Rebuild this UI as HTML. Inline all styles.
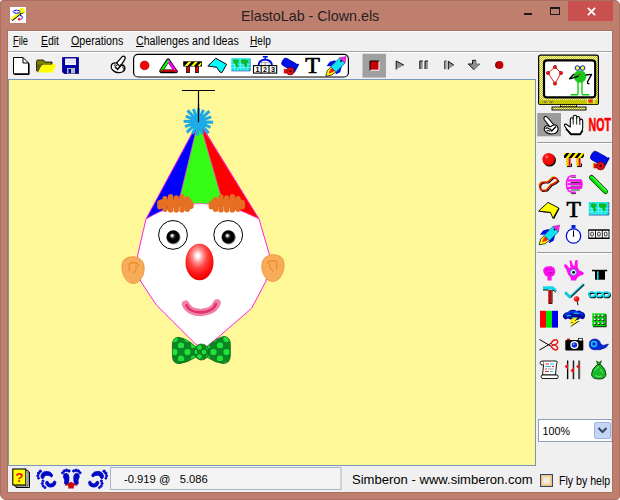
<!DOCTYPE html>
<html><head><meta charset="utf-8">
<style>
*{box-sizing:border-box;margin:0;padding:0}
html,body{width:620px;height:500px;overflow:hidden;background:#fff;font-family:"Liberation Sans",sans-serif;}
#win{position:absolute;left:0;top:0;width:620px;height:500px;background:#bf7f6f;border-radius:3px 5px 4px 6px;border:1px solid #a96f61;}
#client{position:absolute;left:8px;top:31px;width:604px;height:461px;background:#f0f0f0;}
.abs,svg{position:absolute}
#title{position:absolute;left:240.8px;top:7px;white-space:nowrap;font-size:15px;color:#262220;transform-origin:0 0;transform:scaleX(0.953)}
#close{position:absolute;left:568px;top:1px;width:45px;height:20px;background:#c8504f}
#canvas{position:absolute;left:8px;top:79px;width:528px;height:387px;background:#fff899;border:1px solid #7597ba}
.menu{position:absolute;top:34px;font-size:12px;color:#000;white-space:nowrap;transform-origin:0 0}
.px{shape-rendering:crispEdges}
.sb{position:absolute;white-space:nowrap;color:#000}
</style></head><body>
<div id="win"></div>
<div class="abs" style="left:7px;top:30px;width:606px;height:463px;background:#aa7162"></div>
<div id="client"></div>
<div class="abs" style="left:8px;top:31px;width:604px;height:1px;background:#f9f9fd"></div>
<div id="title">ElastoLab - Clown.els</div>
<div id="close"></div>
<svg style="left:10px;top:7px" width="16" height="16" viewBox="0 0 16 16">
<rect width="16" height="16" fill="#fff"/>
<path d="M2 13.3L9.5 7.3L14.2 4.8" stroke="#000" stroke-width="1.8" fill="none"/>
<path d="M1.6 12.2L9.6 5.8" stroke="#ffff00" stroke-width="2.3" fill="none"/>
<ellipse cx="12" cy="3.6" rx="2.9" ry="2.5" fill="#ffff00"/>
<path d="M9 5.5L12 6.5L11 4z" fill="#ffff00"/>
<ellipse cx="6.6" cy="4.7" rx="3.4" ry="1.5" fill="none" stroke="#0000ff" stroke-width="1"/>
<path d="M9.8 8Q12.8 8.8 12.4 10.8Q12.2 11.8 11.3 12.2" stroke="#0000ff" stroke-width="1" fill="none"/>
<circle cx="9.3" cy="12.3" r="1.3" fill="#ff0000"/>
</svg>
<div class="abs" style="left:524px;top:13px;width:8px;height:2px;background:#1a1a1a"></div>
<div class="abs" style="left:550px;top:7px;width:10px;height:8px;border:1px solid #1a1a1a;border-top-width:2px"></div>
<svg style="left:586px;top:6px" width="11" height="11" viewBox="0 0 11 11"><path d="M1.9 1.9L9.1 9.1M9.1 1.9L1.9 9.1" stroke="#fff" stroke-width="1.8" fill="none"/></svg>

<div class="menu" style="left:13px;transform:scaleX(0.775)"><u>F</u>ile</div>
<div class="menu" style="left:40.8px;transform:scaleX(0.87)"><u>E</u>dit</div>
<div class="menu" style="left:71px;transform:scaleX(0.892)"><u>O</u>perations</div>
<div class="menu" style="left:135.5px;transform:scaleX(0.885)"><u>C</u>hallenges and Ideas</div>
<div class="menu" style="left:250.3px;transform:scaleX(0.84)"><u>H</u>elp</div>
<div class="abs" style="left:8px;top:51px;width:604px;height:1px;background:#a5a5a5"></div>
<div class="abs" style="left:8px;top:52px;width:604px;height:1px;background:#fbfbfb"></div>
<div id="canvas"></div>
<!--CLOWN-->
<svg id="clown" style="left:100px;top:80px" width="220" height="300" viewBox="100 80 220 300">
<defs>
<radialGradient id="nose" cx="0.44" cy="0.33" r="0.66"><stop offset="0" stop-color="#fff"/><stop offset="0.07" stop-color="#fff"/><stop offset="0.25" stop-color="#ffa0a0"/><stop offset="0.5" stop-color="#ff4444"/><stop offset="0.8" stop-color="#fb1010"/><stop offset="1" stop-color="#f00000"/></radialGradient>
<radialGradient id="pup" cx="0.5" cy="0.5" r="0.5" fx="0.4" fy="0.36"><stop offset="0" stop-color="#fff"/><stop offset="0.12" stop-color="#ddd"/><stop offset="0.32" stop-color="#222"/><stop offset="0.5" stop-color="#000"/><stop offset="0.78" stop-color="#000"/><stop offset="1" stop-color="#000" stop-opacity="0"/></radialGradient>
<pattern id="dots" x="171" y="335" width="13" height="13" patternUnits="userSpaceOnUse"><rect width="13" height="13" fill="#0c8622"/><circle cx="3.5" cy="4" r="3.1" fill="#20e23a"/><circle cx="10" cy="10.5" r="3.1" fill="#20e23a"/></pattern><pattern id="dots2" x="197" y="345" width="9" height="9" patternUnits="userSpaceOnUse"><rect width="9" height="9" fill="#0c8622"/><circle cx="2.5" cy="2.5" r="2.3" fill="#20e23a"/><circle cx="7" cy="7" r="2.3" fill="#20e23a"/></pattern>
</defs>
<!-- hat -->
<polygon points="198.5,121.5 146,219 259,219" fill="#36fb14"/>
<polygon points="198.2,121.5 146,219 174.6,219" fill="#0000ff"/>
<polygon points="199.4,121.5 227.6,219 259,219" fill="#ff0000"/>
<path d="M198.2 121.5L174.6 219M199.4 121.5L227.6 219" stroke="#ff40e0" stroke-width="0.7" fill="none"/>
<!-- face -->
<path d="M146,219 Q170,204 200,203.5 Q232,204 259,219 L269.5,255 268.5,270 266,281 251.7,308.2 218.7,336.8 205,348 200,347 195,343.5 156.4,305 140.5,281 138.5,270 137.5,256Z" fill="#fff"/>
<path d="M146,219 Q170,204 200,203.5 Q232,204 259,219" fill="none" stroke="#ff40e0" stroke-width="0.8"/>
<polyline points="198.5,121.5 146,219 137.5,256 138.5,270 140.5,281 156.4,305 195,343.5 200,347 205,348 218.7,336.8 251.7,308.2 266,281 268.5,270 269.5,255 259,219 198.5,121.5" fill="none" stroke="#ff20e0" stroke-width="1"/>
<!-- T bar -->
<path d="M182 90.5H215M198.5 90V122.3" stroke="#000" stroke-width="1.2" fill="none"/>
<!-- pompom -->
<path d="M198.1 121.7L213.1 122.2M198.1 121.7L210.4 127.3M198.1 121.7L208.7 133.0M198.1 121.7L202.7 133.9M198.1 121.7L197.6 135.5M198.1 121.7L192.5 134.0M198.1 121.7L186.8 132.3M198.1 121.7L185.0 126.6M198.1 121.7L183.6 121.2M198.1 121.7L185.8 116.1M198.1 121.7L187.5 110.4M198.1 121.7L193.4 109.1M198.1 121.7L198.6 108.1M198.1 121.7L203.5 109.9M198.1 121.7L209.4 111.1M198.1 121.7L211.2 116.8" stroke="#1cabe6" stroke-width="3" fill="none"/>
<circle cx="198.1" cy="121.7" r="6.5" fill="#1cabe6"/>
<path d="M198.5 104V122.3" stroke="#000" stroke-width="1.2"/>
<!-- hair -->
<path d="M160 199.5H191.5V207H160zM211.5 199.5H242.5V207H211.5z" fill="#e57022"/>
<path d="M159.8 202.7V206.8M165.0 198.7V209.3M170.6 196.7V209.9M176.3 198.0V209.9M182.0 196.7V209.9M187.4 199.0V209.3M191.0 203.7V206.3M211.3 203.7V206.8M215.5 199.7V209.3M221.0 197.0V209.9M226.7 198.0V209.9M232.4 196.7V209.9M238.0 198.7V209.3M242.3 202.7V206.8" stroke="#e57022" stroke-width="5.3" stroke-linecap="round" fill="none"/>
<!-- eyes -->
<circle cx="173" cy="234.9" r="14.4" fill="#fff" stroke="#000" stroke-width="1"/>
<circle cx="228.2" cy="234.9" r="14.4" fill="#fff" stroke="#000" stroke-width="1"/>
<circle cx="173.4" cy="237.3" r="7.6" fill="url(#pup)"/>
<circle cx="228.6" cy="237.3" r="7.6" fill="url(#pup)"/>
<!-- nose -->
<ellipse cx="199.5" cy="262" rx="14" ry="18.3" fill="url(#nose)"/>
<!-- ears -->
<path d="M261.8 266Q261.8 256.5 271.5 254.8Q283 254.3 284 263Q284.6 272 279 278.8Q274 283.3 268 280Q261.8 275 261.8 266z" fill="#f6ac58" stroke="#f09a3c" stroke-width="1"/><path d="M267 264Q270 259 276.5 261.5Q277.5 265 276.5 269.5M270.5 263.5Q268 267 273 271" fill="none" stroke="#ee8a28" stroke-width="1.2"/>
<g transform="translate(406 2) scale(-1 1)"><path d="M261.8 266Q261.8 256.5 271.5 254.8Q283 254.3 284 263Q284.6 272 279 278.8Q274 283.3 268 280Q261.8 275 261.8 266z" fill="#f6ac58" stroke="#f09a3c" stroke-width="1"/><path d="M267 264Q270 259 276.5 261.5Q277.5 265 276.5 269.5M270.5 263.5Q268 267 273 271" fill="none" stroke="#ee8a28" stroke-width="1.2"/></g>
<!-- mouth -->
<path d="M185.6 304.2C190 315.5 212 315.5 217 303" fill="none" stroke="#ef82aa" stroke-width="7.6" stroke-linecap="round"/>
<path d="M186.6 305.2C190.5 315 211.5 315 216 304" fill="none" stroke="#e0306e" stroke-width="2.6" stroke-linecap="round"/>
<!-- bow tie -->
<path d="M196 347Q187 338.5 178.5 337.3Q172 337.5 172.3 346L172.5 357Q173 364.2 180 363.6Q188 362.3 196 357z" fill="url(#dots)" stroke="#0a6a1c" stroke-width="0.8"/>
<path d="M207 347Q216 338 224 336.4Q230.6 336.8 230.4 345L230.3 356Q230 363.6 223 363.6Q215 362.6 207 357z" fill="url(#dots)" stroke="#0a6a1c" stroke-width="0.8"/>
<ellipse cx="201.5" cy="352" rx="7.3" ry="8" fill="url(#dots2)" stroke="#0a6a1c" stroke-width="0.8"/>
</svg>
<svg id="tb" style="left:8px;top:52px" width="604" height="28" viewBox="8 52 604 28">
<!-- new doc -->
<path d="M13.5 57.5H23L28.5 63V74H13.5z" fill="#fff" stroke="#000" stroke-width="1"/>
<path d="M23 57.5V63H28.5" fill="none" stroke="#000" stroke-width="1"/>
<path d="M14.5 74.3H29M28.8 63.5V74.5" stroke="#000" stroke-width="1.6" fill="none"/>
<!-- folder -->
<path d="M36.5 71V61.5Q36.5 60 38 60H43.5L45 62H52V64.5H42z" fill="#808000" stroke="#000" stroke-width="0.8"/>
<path d="M36.5 71L38 72.5L42 64.5H37z" fill="#606000"/>
<path d="M42.5 64.5H56.5L52.5 72.5H38.5z" fill="#ffff00"/>
<!-- floppy -->
<path d="M62.5 57.5H78.5V73.5H64L62.5 72z" fill="#0000a8" stroke="#00007a" stroke-width="0.8"/>
<rect x="65" y="58.5" width="11" height="6.5" fill="#f4f4ff"/>
<path d="M65 60.5H76M65 62.5H76" stroke="#c8c8e0" stroke-width="0.6"/>
<rect x="67" y="68" width="8" height="5.5" fill="#b8b8b8"/>
<rect x="68.5" y="69" width="2.5" height="4" fill="#0000a8"/>
<!-- pointing hand with check -->
<g stroke="#000" stroke-width="1.25" fill="#fff" stroke-linejoin="round">
<path d="M116.3 63.3L122 56.8Q123.5 55.6 124.8 56.8Q125.8 58.2 124.7 59.6L120.3 66.3"/>
<path d="M116.4 63Q112.5 62.3 111.4 65.3Q110.6 68 112.5 70Q115 72.8 119.5 72.6Q124 72.2 124.8 69.3Q125.3 66.5 122.8 64.8L121 65.3L120.2 66.6z"/>
<path d="M113.8 65.3Q115.8 64.3 117.3 65.8M122.3 65.2Q123.8 66.5 122.6 68M123.6 68Q124.3 69.5 122.8 70.5" fill="none" stroke-width="1"/>
</g>
<path d="M114.9 66.6L117.6 69.4L121.6 64.3" stroke="#000" stroke-width="1.5" fill="none"/>
<!-- rounded box -->
<rect x="133.6" y="54.4" width="214.8" height="22.6" rx="4.5" ry="4.5" fill="#fff" stroke="#000" stroke-width="1.2"/>
<!-- red dot -->
<circle cx="144.6" cy="65.4" r="4.4" fill="#ff0000" stroke="#7a0000" stroke-width="0.6"/>
<!-- triangle -->
<path d="M161.3 71.4H176" stroke="#000" stroke-width="3.6" stroke-linecap="round"/>
<path d="M168 60.3L161.2 70.8" stroke="#000" stroke-width="3.6" stroke-linecap="round"/>
<path d="M168.3 60.3L175.5 70.8" stroke="#400040" stroke-width="3.4" stroke-linecap="round"/>
<path d="M168.2 60.8L175.6 71" stroke="#ff00ff" stroke-width="2.2" stroke-linecap="round"/>
<path d="M168 60.8L161.4 70.6" stroke="#00ff00" stroke-width="2.2" stroke-linecap="round"/>
<path d="M161.6 70.8H175.4" stroke="#c80000" stroke-width="2" stroke-linecap="round"/>
<!-- barrier -->
<rect x="183.2" y="61.3" width="18.8" height="5.2" fill="#000"/>
<path d="M184.5 66L188.5 61.8H191.5L187.5 66zM191 66L195 61.8H198L194 66zM197.5 66L201.3 62V64.5L200 66z" fill="#ffff00"/>
<rect x="186.4" y="66.5" width="3.2" height="6.2" fill="#e00000" stroke="#000" stroke-width="0.7"/>
<rect x="195.4" y="66.5" width="3.2" height="6.2" fill="#e00000" stroke="#000" stroke-width="0.7"/>
<!-- cyan polygon -->
<path d="M207.8 66L215.8 58.3L226.6 64.3L222 72.5L219.8 72L216.8 67.3z" fill="#00ffff" stroke="#000" stroke-width="1" stroke-linejoin="round"/>
<!-- map -->
<rect x="231.3" y="58.2" width="18.7" height="12.5" fill="#10e4e4"/>
<path d="M231.3 70.9H250.2V58.5" stroke="#2070c0" stroke-width="0.9" fill="none"/>
<path d="M234.5 58.2V70.7M237.6 58.2V70.7M240.7 58.2V70.7M243.8 58.2V70.7M246.9 58.2V70.7M231.3 61.3H250M231.3 64.4H250M231.3 67.5H250" stroke="#90ffff" stroke-width="0.6"/>
<path d="M232.8 60.2Q235 58.7 237.8 59.6L239.2 61.5L237.5 63.5L238.4 65.3L237.8 67.8L236.4 67.3L235.4 64.4L233.7 62.7zM240.8 59.7Q244 58.7 247.5 59.8L249 61.8L247.3 63L247 66.4L245.6 67.8L244.4 64.9L242.7 63.7L240.8 62.5z" fill="#10b828"/>
<!-- 123 -->
<rect x="261.6" y="62.4" width="3.4" height="3" fill="#fff" stroke="#909090" stroke-width="0.6"/><rect x="265.6" y="62.4" width="3.4" height="3" fill="#fff" stroke="#909090" stroke-width="0.6"/>
<path d="M258.6 65.2Q258.8 60.2 265.2 59.6Q271.6 60.2 271.9 65.2" fill="none" stroke="#0010e0" stroke-width="2"/>
<path d="M262.8 56.7H267.8M265.3 56.7V60" stroke="#0010e0" stroke-width="1.4" fill="none"/>
<rect x="253.5" y="65.6" width="23.2" height="7.5" fill="#fff" stroke="#000" stroke-width="1.1"/>
<path d="M261.2 65.6V73M269 65.6V73" stroke="#000" stroke-width="1.1"/>
<g font-family="Liberation Sans" font-size="7.2" font-weight="bold" fill="#000"><text x="255.4" y="72.2">1</text><text x="263.1" y="72.2">2</text><text x="270.9" y="72.2">3</text></g>
<!-- cannon -->
<g transform="rotate(29 289.8 64.6)"><rect x="281.6" y="60.6" width="15.6" height="8.2" rx="3" fill="#0010e8" stroke="#000070" stroke-width="0.6"/><rect x="295.8" y="60" width="2.2" height="9.4" fill="#0010c0"/></g>
<path d="M283.8 68.5V73.5H287V69.5z" fill="#e01010"/>
<circle cx="290.3" cy="71.2" r="3.7" fill="#e81010" stroke="#700000" stroke-width="0.7"/>
<circle cx="290.3" cy="71.2" r="1.3" fill="#500000"/>
<!-- T -->
<text x="305.2" y="73" font-family="Liberation Serif" font-size="24" fill="#000" stroke="#000" stroke-width="0.7">T</text>
<!-- rocket -->
<g>
<path d="M325.8 76.3L327.3 70.5L331 66.8L336 71.8L331.8 75z" fill="#ffff00" stroke="#000" stroke-width="0.7" stroke-linejoin="round"/>
<path d="M328.6 73.6L330.2 69.6L332 68L334.6 70.8L332.8 72.3z" fill="#ff2000"/>
<path d="M326.5 66.2L329.8 61.8L335 60.3L336.2 61.5L331.8 66z" fill="#0010e0"/>
<path d="M335.5 74.6L340.2 72.2L341.8 66.5L340.5 65.3L336.5 69.5z" fill="#0010e0"/>
<path d="M330.6 66.8L339.6 57.8L345 63.2L336 72.2z" fill="#10e0f0" stroke="#003080" stroke-width="0.6"/>
<path d="M339.6 57.8L346.2 56.4L345 63.2z" fill="#ff20e8" stroke="#700070" stroke-width="0.4"/>
<circle cx="341" cy="61" r="0.9" fill="#000"/>
</g>
<!-- stop -->
<rect x="362.5" y="53.8" width="23.5" height="23.8" fill="#a0a0a0"/>
<rect x="370" y="61" width="9" height="9.2" fill="#c80000"/>
<path d="M370 70.4V61H379.2" stroke="#000" stroke-width="1" fill="none"/>
<path d="M370.5 70.2H379V61.5" stroke="#fff" stroke-width="1" fill="none"/>
<!-- play -->
<path d="M396.2 61V69.3L404 65.2z" fill="#909090"/>
<path d="M396.2 69.5V61L404 65.2" stroke="#101010" stroke-width="1" fill="none" stroke-linejoin="miter"/>
<!-- pause -->
<rect x="419.8" y="61" width="2.8" height="8" fill="#909090"/><rect x="425" y="61" width="2.8" height="8" fill="#909090"/>
<path d="M419.8 69V61H422.8M425 69V61H428" stroke="#101010" stroke-width="1" fill="none"/>
<!-- step -->
<path d="M444.8 69.2V61H446.6" stroke="#101010" stroke-width="1" fill="none"/><rect x="445" y="61.3" width="1.6" height="7.8" fill="#909090"/>
<path d="M448.3 61.2V69.3L454 65.3z" fill="#909090"/>
<path d="M448.3 69.5V61.2L454 65.3" stroke="#101010" stroke-width="1" fill="none"/>
<!-- down arrow -->
<path d="M472.5 60.3H476V64H480L474 69.7L468.2 64H472.5z" fill="#909090"/>
<path d="M476 60.3H472.5V64H468.2L474 69.7" stroke="#101010" stroke-width="1" fill="none"/>
<path d="M474 69.7L480 64H476V60.5" stroke="#606060" stroke-width="0.7" fill="none"/>
<!-- record -->
<circle cx="499.4" cy="65.1" r="4" fill="#c00000"/>
<path d="M496.3 62.6Q495 65 496.3 67.6" stroke="#300000" stroke-width="0.9" fill="none"/>
</svg>

<svg id="rp" style="left:536px;top:52px" width="76" height="400" viewBox="536 52 76 400">
<defs>
<pattern id="dith" width="2" height="2" patternUnits="userSpaceOnUse"><rect width="2" height="2" fill="#c4c400"/><rect width="1" height="1" fill="#fdfdd0"/><rect x="1" y="1" width="1" height="1" fill="#fdfdd0"/></pattern>
<radialGradient id="ball" cx="0.35" cy="0.3" r="0.7"><stop offset="0" stop-color="#ff8080"/><stop offset="0.25" stop-color="#ff1010"/><stop offset="1" stop-color="#e80000"/></radialGradient>
</defs>
<!-- monitor -->
<rect x="538.6" y="55.2" width="59.8" height="49.3" rx="2" fill="url(#dith)" stroke="#000" stroke-width="1.2"/>
<rect x="544" y="60.4" width="51.2" height="37" rx="3" fill="#fff" stroke="#000" stroke-width="2.2"/>
<rect x="539.2" y="100" width="58.6" height="4.2" fill="#c6c600"/>
<path d="M543 101.2H547.4L545.2 103.4zM549 101.2H553.4L551.2 103.4z" fill="#707070"/>
<rect x="588.5" y="99.5" width="4" height="3" fill="#ff2020"/>
<path d="M587.5 98.5V104M594 98.5V104" stroke="#fff" stroke-width="0.7"/>
<rect x="560.5" y="104.6" width="16" height="2.4" fill="url(#dith)" stroke="#000" stroke-width="0.8"/>
<rect x="552" y="107" width="34" height="3" fill="url(#dith)" stroke="#000" stroke-width="0.9"/>
<!-- diamond -->
<path d="M555 67L548 73L555 83.6L561 73z" fill="none" stroke="#e00000" stroke-width="0.9"/>
<g fill="#ff1010" stroke="#700000" stroke-width="0.5"><circle cx="555" cy="67" r="1.7"/><circle cx="548" cy="73" r="1.7"/><circle cx="561" cy="73" r="1.7"/><circle cx="555" cy="83.6" r="1.7"/></g>
<!-- frog -->
<path d="M578 81V94.5M582 81V94.5M570.5 94.7H578M582 94.7H589.5" stroke="#10d010" stroke-width="1.4" fill="none"/>
<circle cx="580" cy="76.5" r="6.2" fill="#18c818"/>
<path d="M574.3 73.8L569.6 78.8L574 77.6L578.6 76" stroke="#000" stroke-width="1.4" fill="none" stroke-linejoin="round"/>
<path d="M585.6 75L591.6 74.4L587.6 81.6V83.4L589.6 84" stroke="#000" stroke-width="1.3" fill="none" stroke-linejoin="round"/>
<circle cx="577.4" cy="68" r="2.3" fill="#ffff20" stroke="#0020e0" stroke-width="1"/>
<circle cx="582.6" cy="68" r="2.3" fill="#ffff20" stroke="#0020e0" stroke-width="1"/>
<path d="M578.8 74.6H581" stroke="#e02020" stroke-width="1.1"/>
<!-- pointer row -->
<rect x="537.3" y="113" width="23.7" height="23.3" fill="#9c9c9c"/>
<g stroke="#000" stroke-width="1.1" fill="#fff" stroke-linejoin="round">
<path d="M550 127L544.2 119.5Q543.3 117.8 544.8 116.8Q546.3 116 547.5 117.5L554 125"/>
<path d="M550.2 126.7Q545.5 124.5 544.5 127.5Q543.5 130.5 546.5 132.5Q550 134.8 554.5 133.5Q558.5 132 558 128.2Q557.5 125 554 124.8z"/>
<path d="M545.5 128.5Q547.5 127 549 129M546.5 131Q548.5 129.8 550 131.5" fill="none"/>
</g>
<path d="M549.5 128.5L551.8 131L556 126.5" stroke="#000" stroke-width="1.3" fill="none"/>
<!-- open hand -->
<path d="M571.2 134L566.5 128.8L564.4 125.5Q564.4 123.8 566 124L569 126.2L570.3 127V119.5Q570.3 117.7 571.7 117.7Q573.2 117.7 573.2 119.3V116.8Q573.3 115.2 575 115.2Q576.7 115.2 576.7 116.8V118Q576.8 116.5 578.3 116.5Q579.8 116.6 579.8 118.3V120.5Q580 119 581.3 119.1Q582.7 119.3 582.7 121V128Q582.5 131.5 580 134z" fill="#fff" stroke="#000" stroke-width="1.1" stroke-linejoin="round"/>
<path d="M573.2 119.3V124.5M576.7 118V124.5M579.8 120.5V125" stroke="#000" stroke-width="0.9"/>
<path d="M566 128.8L571 134.4H580.2L582.6 130.5" stroke="#000" stroke-width="1.7" fill="none" stroke-linejoin="round"/>
<!-- NOT -->
<text x="0" y="0" transform="translate(588.5 131.3) scale(0.575 1.02)" font-family="Liberation Sans" font-weight="bold" font-size="18.5" fill="#ff0000" stroke="#ff0000" stroke-width="0.6">NOT</text>
<!-- separators -->
<path d="M537 142.5H612" stroke="#9a9a9a" stroke-width="1"/>
<path d="M537 143.5H612" stroke="#fcfcfc" stroke-width="1"/>
<path d="M537 252.5H612" stroke="#9a9a9a" stroke-width="1"/>
<path d="M537 253.5H612" stroke="#fcfcfc" stroke-width="1"/>
<!-- ROW A1: ball, barrier, cannon -->
<circle cx="549.6" cy="160.2" r="6.3" fill="#000"/>
<circle cx="548.6" cy="159.2" r="6.2" fill="url(#ball)"/>
<g>
<rect x="564" y="153" width="20" height="5" fill="#ffee00"/>
<path d="M566.5 153H569.5L565.5 158H564V155.5zM572.5 153H575.5L571.5 158H568.5zM578.5 153H581.5L577.5 158H574.5zM584 153.5V156L582.5 158H580.5z" fill="#000"/>
<path d="M566.2 158H568.6V166H566.2zM576.2 158H578.6V166H576.2z" fill="#e8d000"/>
<path d="M568.6 158H570.6V166H568.6zM578.6 158H580.6V166H578.6z" fill="#e01010"/>
<path d="M567 166.6H571.5V163.5M577 166.6H581.5V163.5" stroke="#000" stroke-width="1" fill="none"/>
</g>
<g>
<g transform="rotate(29 600 159)"><rect x="590.4" y="154.2" width="17" height="9.6" rx="3.2" fill="#0010e8" stroke="#000070" stroke-width="0.6"/><rect x="605.8" y="153.4" width="2.4" height="11.2" fill="#0010c0"/></g>
<path d="M593.6 163V168.2H597V164z" fill="#e01010"/><path d="M593.3 163V168.2" stroke="#d0b000" stroke-width="0.9"/>
<circle cx="600.6" cy="165.9" r="4" fill="#e81010" stroke="#700000" stroke-width="0.7"/>
<circle cx="600.6" cy="165.9" r="1.4" fill="#500000"/>
</g>
<!-- ROW A2: rubber band, spring, rod -->
<g fill="none" stroke-linejoin="round">
<path d="M539.8 185Q541 182.3 544 182.2L548 182L553 177.6Q556 176.8 558 180.5L555 183L551 185L546.5 190.2L541.8 190.5Q539.4 189 539.8 185z" stroke="#000" stroke-width="1.2" transform="translate(0.8 0.8)"/>
<path d="M539.8 185Q541 182.3 544 182.2L548 182L553 177.6Q556 176.8 558 180.5L555 183L551 185L546.5 190.2L541.8 190.5Q539.4 189 539.8 185z" stroke="#e0d000" stroke-width="1.1" transform="translate(-0.6 -0.6)"/>
<path d="M539.8 185Q541 182.3 544 182.2L548 182L553 177.6Q556 176.8 558 180.5L555 183L551 185L546.5 190.2L541.8 190.5Q539.4 189 539.8 185z" stroke="#e01010" stroke-width="1.4"/>
</g>
<g fill="none" stroke-linecap="round">
<g stroke="#000" stroke-width="0.8"><path d="M571 182.5H580.5M571 186.2H580.5M571 190H579.5M571.5 177.2H575.5M571.5 193.6H575.5"/></g>
<g stroke="#ff10f0" stroke-width="2.3"><path d="M568.5 180.5H580.5M568.5 184.2H581M568.5 187.9H580.5"/><path d="M581 180.8Q582.5 184.3 581 187.8"/></g>
<g stroke="#ff10f0" stroke-width="1.6"><path d="M575.3 175.8H571.5Q566.5 177 566.5 184.2Q566.5 191 571.5 192.2H575.3"/></g>
</g>
<path d="M591.5 177.5L605.5 191.5" stroke="#004000" stroke-width="5" stroke-linecap="round"/>
<path d="M591.5 177.5L605.5 191.5" stroke="#00ee00" stroke-width="3.4" stroke-linecap="round"/>
<path d="M592.5 177L606 190.5" stroke="#a0ffa0" stroke-width="0.9" stroke-linecap="round"/>
<!-- ROW A3: polygon, T, map -->
<path d="M539.3 211.8L548.8 203L559.6 208.6L554 219.3L551.3 213.2z" fill="#000"/>
<path d="M538.6 211.1L548 202.4L558.8 208L553 218.4L550.5 212.4z" fill="#ffff00" stroke="#000" stroke-width="0.9" stroke-linejoin="round"/>
<text x="566.4" y="216.6" font-family="Liberation Serif" font-size="23.5" fill="#000" stroke="#000" stroke-width="0.7">T</text>
<g>
<rect x="588.8" y="202" width="19.8" height="12.8" fill="#10e4e4"/>
<path d="M588.8 215H608.8V202.3" stroke="#1060b0" stroke-width="0.9" fill="none"/>
<path d="M592 202V214.8M595.2 202V214.8M598.4 202V214.8M601.6 202V214.8M604.8 202V214.8M588.8 205.2H608.6M588.8 208.4H608.6M588.8 211.6H608.6" stroke="#90ffff" stroke-width="0.6"/>
<path d="M590.3 204.2Q592.5 202.6 595.5 203.6L597 205.5L595.2 207.6L596.2 209.5L595.5 212L594 211.5L593 208.5L591.2 206.8zM598.8 203.6Q602 202.6 605.8 203.8L607.3 205.8L605.6 207L605.2 210.5L603.8 212L602.6 209L600.8 207.8L598.8 206.5z" fill="#10b828"/>
</g>
<!-- ROW A4: rocket, stopwatch, counter -->
<g transform="translate(213.4 168.6)">
<path d="M325.8 76.3L327.3 70.5L331 66.8L336 71.8L331.8 75z" fill="#ffff00" stroke="#000" stroke-width="0.7" stroke-linejoin="round"/>
<path d="M328.6 73.6L330.2 69.6L332 68L334.6 70.8L332.8 72.3z" fill="#ff2000"/>
<path d="M326.5 66.2L329.8 61.8L335 60.3L336.2 61.5L331.8 66z" fill="#0010e0"/>
<path d="M335.5 74.6L340.2 72.2L341.8 66.5L340.5 65.3L336.5 69.5z" fill="#0010e0"/>
<path d="M330.6 66.8L339.6 57.8L345 63.2L336 72.2z" fill="#10e0f0" stroke="#003080" stroke-width="0.6"/>
<path d="M339.6 57.8L346.2 56.4L345 63.2z" fill="#ff20e8" stroke="#700070" stroke-width="0.4"/>
<circle cx="341" cy="61" r="0.9" fill="#000"/>
</g>
<g>
<rect x="571.5" y="225" width="4" height="3.5" fill="#0020e0"/>
<circle cx="573.5" cy="236" r="7.2" fill="#fff" stroke="#0010d8" stroke-width="1.3"/>
<path d="M573.5 236V230.5" stroke="#000" stroke-width="1"/>
<circle cx="573.5" cy="236" r="0.8" fill="#000"/>
</g>
<g>
<rect x="588.3" y="229.3" width="21.2" height="9.6" fill="#fff"/>
<path d="M588.3 230H609.5M588.3 238.3H609.5" stroke="#000" stroke-width="1.4"/>
<path d="M588.8 230V238M595.5 230V238M602.3 230V238M609 230V238" stroke="#000" stroke-width="0.9"/>
<g fill="none" stroke="#000" stroke-width="0.8"><rect x="590.8" y="232.2" width="2.6" height="3.8" rx="1"/><rect x="597.6" y="232.2" width="2.6" height="3.8" rx="1"/><rect x="604.4" y="232.2" width="2.6" height="3.8" rx="1"/></g>
</g>
<!-- ROW B1: fist, eye-hand, top hat -->
<path d="M543.3 271.5Q542.8 268 545.5 267Q547 265.8 548.8 266.5Q550.5 265.6 552.3 266.8Q554.8 267.2 555 270Q555.8 274 553.5 275.8L551.6 276.8V280.5H547.5V276.8Q544 275.5 543.3 271.5z" fill="#ff10f0"/>
<path d="M545.5 270.5Q546.5 268.5 548.5 269.5Q550 268 552 269.5M547 273.5Q549.5 272 552.5 272.5M549 275L551.5 274" stroke="#b800b0" stroke-width="0.9" fill="none"/>
<g>
<path d="M571 280.5L570.5 277.5L568 274.5L566.5 270L564 266L564.5 264.3L566.5 264.6L569.5 268.5L570.5 267.5L569.5 261L571.3 260.2L573 265.5L574.5 266L575.3 260.3L577.6 260L577.8 267.5L579.5 270.5L583 272L584 273.5L583 274.8L579.5 276L577 278L576 280.5z" fill="#ff10f0"/>
<circle cx="573.4" cy="272.3" r="2.9" fill="#fff" stroke="#00c0d0" stroke-width="0.8"/>
<circle cx="573.6" cy="272.3" r="1.4" fill="#000"/>
</g>
<g>
<rect x="592" y="269.8" width="15.2" height="1.5" fill="#000"/>
<rect x="595" y="271" width="10" height="8.7" fill="#000"/>
<rect x="597" y="271.3" width="1.6" height="8.4" fill="#10d8e0"/>
</g>
<!-- ROW B2: hammer, check+pin, chain -->
<g>
<path d="M543 286.3H552.5Q556 287.5 557.2 291.3L555.8 292Q554 289.8 552 289.8H543z" fill="#10d8e8"/>
<path d="M543 290H548.3M552.3 290Q554 290.3 555.8 292.3" stroke="#000" stroke-width="0.9" fill="none"/>
<rect x="548.3" y="290" width="3.4" height="13.2" fill="#b80808"/>
<path d="M552.1 290.3V303.5H548.5" stroke="#300000" stroke-width="0.9" fill="none"/>
</g>
<g>
<path d="M584 284.2L570 297.5" stroke="#10c8d8" stroke-width="1.2" transform="translate(-0.5 -0.5)"/>
<path d="M584 284.2L570 297.5" stroke="#003038" stroke-width="1.2" transform="translate(0.3 0.3)"/>
<path d="M566 293.2L569.6 296.8" stroke="#10c8d8" stroke-width="3" stroke-linecap="round"/>
<path d="M577.2 301L578 305.3" stroke="#101010" stroke-width="1"/>
<circle cx="576.6" cy="299" r="2.7" fill="#f01010"/>
<circle cx="575.8" cy="298.2" r="0.8" fill="#ffa0a0"/>
</g>
<g fill="none">
<g stroke="#000" stroke-width="1.6" transform="translate(0.8 0.9)"><ellipse cx="592" cy="294.3" rx="3.3" ry="2.3"/><ellipse cx="599" cy="294.3" rx="3.3" ry="2.3"/><ellipse cx="606" cy="294.3" rx="3.3" ry="2.3"/></g>
<g stroke="#10d8e8" stroke-width="1.7"><ellipse cx="592" cy="294.3" rx="3.3" ry="2.3"/><ellipse cx="599" cy="294.3" rx="3.3" ry="2.3"/><ellipse cx="606" cy="294.3" rx="3.3" ry="2.3"/></g>
</g>
<!-- ROW B3: RGB, cloud, grid -->
<rect x="540" y="310.8" width="6" height="16.8" fill="#ff0000"/>
<rect x="546" y="310.8" width="6" height="16.8" fill="#00e800"/>
<rect x="552" y="310.8" width="6" height="16.8" fill="#0000f0"/>
<g>
<path d="M563.5 318Q562 315.5 564 314Q565 311.8 567.8 312.3Q569 309.8 572.5 309.8Q575 309.6 576.5 311Q579.5 309.8 581.5 311.8Q584.8 312.3 585 315.3Q585.3 318.3 582.5 319.3L580 318.3L578 320L574.5 318.3L571 319.8L568 318.5L565.5 319.5z" fill="#000c98"/>
<path d="M566 316Q565.5 313.5 568 313.5Q570 311.5 573 312Q576 311 578.5 312.8Q582 312.8 582.5 315.5" stroke="#0038f0" stroke-width="1.8" fill="none"/>
<path d="M567 316.3Q569 314.8 571 315.8M573.5 313.5Q576 312.6 578.5 313.8M572 318Q574 317.2 576 318" stroke="#10c8f0" stroke-width="1.1" fill="none"/>
<path d="M572 319.3L578.3 317.8L575.3 321.5L579.8 321L570 327.3L573.6 322.8L570.6 323.3z" fill="#000"/>
<path d="M571.5 318.8L577.8 317.3L574.8 321L579.3 320.5L569.5 326.8L573.1 322.3L570.1 322.8z" fill="#ffee00"/>
</g>
<g>
<rect x="593.1" y="314.2" width="13.4" height="13" fill="#000"/>
<rect x="592.2" y="313.3" width="13.4" height="13" fill="#00f000"/>
<rect x="593.70" y="314.70" width="2.7" height="2.6" fill="#000"/><rect x="593.70" y="314.70" width="1.9" height="1.8" fill="#fff"/><rect x="597.65" y="314.70" width="2.7" height="2.6" fill="#000"/><rect x="597.65" y="314.70" width="1.9" height="1.8" fill="#fff"/><rect x="601.60" y="314.70" width="2.7" height="2.6" fill="#000"/><rect x="601.60" y="314.70" width="1.9" height="1.8" fill="#fff"/><rect x="593.70" y="318.55" width="2.7" height="2.6" fill="#000"/><rect x="593.70" y="318.55" width="1.9" height="1.8" fill="#fff"/><rect x="597.65" y="318.55" width="2.7" height="2.6" fill="#000"/><rect x="597.65" y="318.55" width="1.9" height="1.8" fill="#fff"/><rect x="601.60" y="318.55" width="2.7" height="2.6" fill="#000"/><rect x="601.60" y="318.55" width="1.9" height="1.8" fill="#fff"/><rect x="593.70" y="322.40" width="2.7" height="2.6" fill="#000"/><rect x="593.70" y="322.40" width="1.9" height="1.8" fill="#fff"/><rect x="597.65" y="322.40" width="2.7" height="2.6" fill="#000"/><rect x="597.65" y="322.40" width="1.9" height="1.8" fill="#fff"/><rect x="601.60" y="322.40" width="2.7" height="2.6" fill="#000"/><rect x="601.60" y="322.40" width="1.9" height="1.8" fill="#fff"/>
</g>
<!-- ROW B4: scissors, camera, tape -->
<g fill="none">
<path d="M539.5 339.5L552 346.8M539.5 350L552 342.8" stroke="#000" stroke-width="1"/>
<path d="M551 343.5Q553.5 339 556.5 340Q559 341.5 556.5 344Q554 345.5 551.5 344.5M551 346Q553.5 350.8 556.5 349.8Q559 348.3 556.5 346Q554 344.5 551.5 345.5" stroke="#e81010" stroke-width="1.4"/>
</g>
<g>
<rect x="565.3" y="340" width="18" height="10.4" rx="1" fill="#000"/>
<rect x="567" y="338.6" width="3" height="1.6" fill="#e01010"/>
<rect x="578.5" y="338.3" width="4" height="2.6" fill="#fff" stroke="#000" stroke-width="0.7"/>
<circle cx="574.4" cy="345" r="4.1" fill="#fff"/>
<circle cx="574.4" cy="345" r="2.8" fill="#1030e0"/>
<circle cx="573.6" cy="344.2" r="0.9" fill="#90a8ff"/>
</g>
<g>
<path d="M589.3 344.5Q589.3 339.3 594.5 339Q599.5 339 600.5 343.5L603 345.5L608.5 344L606 347.5L600 349.7H594Q589.5 349.3 589.3 344.5z" fill="#0828d8" stroke="#000890" stroke-width="0.6"/>
<circle cx="594" cy="344" r="2.5" fill="#0828d8" stroke="#10d0f0" stroke-width="1.4"/>
</g>
<!-- ROW B5: scroll, sliders, bag -->
<g>
<path d="M543.5 361H556.5Q558 362 556.5 364L555.5 375H542.5L543.5 366z" fill="#fff" stroke="#000" stroke-width="0.9"/>
<path d="M543.5 361Q540 360.5 540 363.2Q540.3 365.3 543.5 365" fill="#fff" stroke="#000" stroke-width="0.9"/>
<path d="M542 375H557.5Q558.8 376.8 557.5 378.5H542Q540 376.8 542 375z" fill="#fff" stroke="#000" stroke-width="0.9"/>
<path d="M545.5 364H549" stroke="#e01010" stroke-width="0.9"/><path d="M550 364H554" stroke="#10a8e0" stroke-width="0.9"/>
<path d="M545.5 366.5H551" stroke="#10a8e0" stroke-width="0.9"/><path d="M552 366.5H554" stroke="#e01010" stroke-width="0.9"/>
<path d="M545 369H547" stroke="#e01010" stroke-width="0.9"/><path d="M548 369H553.5" stroke="#909090" stroke-width="0.9"/>
<path d="M545 371.5H549" stroke="#e01010" stroke-width="0.9"/><path d="M550 371.5H553" stroke="#10a8e0" stroke-width="0.9"/>
</g>
<g>
<path d="M568.4 360.5V379M574.2 360.5V379M579.9 360.5V379" stroke="#a0a0a0" stroke-width="0.9"/>
<path d="M567.5 360.5V379.2M573.3 360.5V379.2M579 360.5V379.2" stroke="#000" stroke-width="1.1"/>
<path d="M568 363.6L564.6 366.6L568 369.6zM573.8 367.6L570.4 370.6L573.8 373.6zM579.5 363.6L576.1 366.6L579.5 369.6z" fill="#f01010"/>
</g>
<g>
<path d="M596.5 361L599 362.5L601.5 360.8L600.3 364.5H597.5z" fill="#10a820" stroke="#003800" stroke-width="0.6"/>
<path d="M597.3 364.5H600.5Q606 369 606 374.5Q605.5 379 599 379Q592 379 591.5 374.5Q591.5 369 597.3 364.5z" fill="#18b828" stroke="#003800" stroke-width="0.9"/>
<path d="M594.5 371Q596 367.5 599 367M595 375.5Q598 377.5 602 376M600 369L603 373" stroke="#80f088" stroke-width="0.8" fill="none"/>
</g>
<!-- combo -->
<rect x="538.5" y="419.5" width="73.5" height="22" fill="#fff" stroke="#8aa2c0" stroke-width="1"/>
<rect x="594.5" y="422.5" width="16" height="16" rx="1.5" fill="#c4d5f6" stroke="#9fb6e0" stroke-width="1"/>
<path d="M598.5 428L602.5 432L606.5 428" stroke="#3a4660" stroke-width="2" fill="none"/>
<text x="542.6" y="434.6" font-family="Liberation Sans" font-size="11" fill="#000" textLength="27.5" lengthAdjust="spacingAndGlyphs">100%</text>
</svg>

<svg id="st" style="left:8px;top:465px" width="604" height="27" viewBox="8 465 604 27">
<!-- help book -->
<path d="M16 472H29.5V487.5H16z" fill="#fff" stroke="#000" stroke-width="1"/>
<path d="M14.5 470.5H28V486H14.5z" fill="#fff" stroke="#000" stroke-width="0.8"/>
<rect x="12.8" y="469" width="13" height="16" fill="#ffff00" stroke="#000" stroke-width="1.1"/>
<text x="15.3" y="482.3" font-family="Liberation Sans" font-weight="bold" font-size="13.5" fill="#e81010">?</text>
<g fill="#0008c8" stroke="#0008c8" stroke-width="0.9" stroke-linejoin="round">
<path d="M41 477.5Q40.5 472.5 45.5 471.5Q50.5 471 52.5 474.5Q53 476.5 51.5 477Q49.5 474.8 46 475.2Q43.8 476 43.5 478.3Q42 479.3 41 477.5z"/>
<circle cx="38.6" cy="473.2" r="1.2"/><circle cx="37.8" cy="475.8" r="1.1"/><circle cx="38.5" cy="478.2" r="1"/><circle cx="40.3" cy="471.2" r="1.2"/>
<path d="M45.5 482.5Q46.5 487.5 51.5 487Q55.5 486.5 56 482.5Q55.5 480.8 54 481Q53 484 50.5 484Q48.5 483.8 48 481.5Q46.3 480.5 45.5 482.5z"/>
<circle cx="43" cy="481" r="1.1"/><circle cx="42.3" cy="483.5" r="1.1"/><circle cx="43.2" cy="486" r="1.1"/><circle cx="45" cy="487.6" r="1"/>
</g>
<g transform="translate(144.4 0) scale(-1 1)"><g fill="#0008c8" stroke="#0008c8" stroke-width="0.9" stroke-linejoin="round">
<path d="M41 477.5Q40.5 472.5 45.5 471.5Q50.5 471 52.5 474.5Q53 476.5 51.5 477Q49.5 474.8 46 475.2Q43.8 476 43.5 478.3Q42 479.3 41 477.5z"/>
<circle cx="38.6" cy="473.2" r="1.2"/><circle cx="37.8" cy="475.8" r="1.1"/><circle cx="38.5" cy="478.2" r="1"/><circle cx="40.3" cy="471.2" r="1.2"/>
<path d="M45.5 482.5Q46.5 487.5 51.5 487Q55.5 486.5 56 482.5Q55.5 480.8 54 481Q53 484 50.5 484Q48.5 483.8 48 481.5Q46.3 480.5 45.5 482.5z"/>
<circle cx="43" cy="481" r="1.1"/><circle cx="42.3" cy="483.5" r="1.1"/><circle cx="43.2" cy="486" r="1.1"/><circle cx="45" cy="487.6" r="1"/>
</g></g>
<!-- two feet -->
<g fill="#0008c8" stroke="#0008c8" stroke-width="0.8" stroke-linejoin="round">
<path d="M63.5 477Q63 473.5 66 473.2Q69 473.5 69 477.5Q69.3 482 67.5 484.5Q65.5 485.5 64.5 483.5Q65.5 480.5 63.5 477z"/>
<circle cx="62.6" cy="472.8" r="1.1"/><circle cx="64.3" cy="471" r="1.2"/><circle cx="66.6" cy="470.3" r="1.3"/><circle cx="69" cy="471" r="1.2"/>
<path d="M79.2 477Q79.7 473.5 76.7 473.2Q73.7 473.5 73.7 477.5Q73.4 482 75.2 484.5Q77.2 485.5 78.2 483.5Q77.2 480.5 79.2 477z"/>
<circle cx="80.1" cy="472.8" r="1.1"/><circle cx="78.4" cy="471" r="1.2"/><circle cx="76.1" cy="470.3" r="1.3"/><circle cx="73.7" cy="471" r="1.2"/>
</g>
<path d="M71 481.8L78 485.6H73.8V488.5H68.3V485.6H64.2z" fill="#c80808"/>
<!-- coord box -->
<rect x="110.5" y="467.5" width="230.5" height="22" fill="#f3f3f3" stroke="#a8b6c6" stroke-width="1"/>
<!-- checkbox -->
<rect x="540.5" y="474.5" width="12" height="12" fill="#ececec" stroke="#2c4a78" stroke-width="1"/>
<rect x="541.8" y="475.8" width="9.4" height="9.4" fill="none" stroke="#f4b860" stroke-width="1.4"/>
<rect x="543.2" y="477.2" width="6.6" height="6.6" fill="none" stroke="#fbe0b0" stroke-width="1.2"/>
</svg>
<div class="sb" style="left:124px;top:472.5px;font-size:11px;transform-origin:0 0;transform:scaleX(1.02)" id="coord">-0.919 @ &nbsp;&nbsp;5.086</div>
<div class="sb" style="left:351.8px;top:471.6px;font-size:13.5px;transform-origin:0 0;transform:scaleX(0.967)" id="simb">Simberon - www.simberon.com</div>
<div class="sb" style="left:558.6px;top:473.8px;font-size:12.3px;transform-origin:0 0;transform:scaleX(0.862)" id="fly">Fly by help</div>

</body></html>
